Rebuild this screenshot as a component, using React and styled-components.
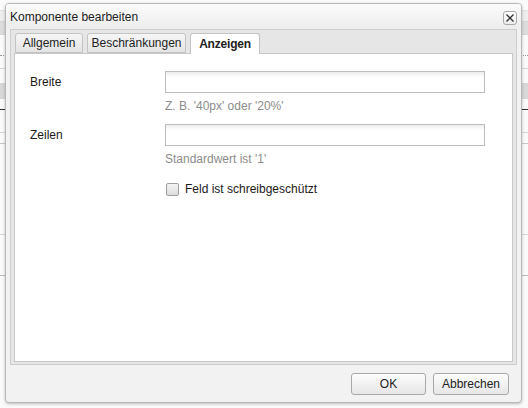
import React from 'react';
import styled, { createGlobalStyle } from 'styled-components';

const GlobalStyle = createGlobalStyle`
	html, body {
		margin: 0;
		padding: 0;
		background: #fafafa;
	}
	body {
		font-family: 'Liberation Sans', Arial, sans-serif;
		font-size: 12px;
		color: #1a1a1a;
	}
`;

const Page = styled.div`
	position: relative;
	width: 528px;
	height: 408px;
	overflow: hidden;
	background: #fafafa;
`;

const BgRow = styled.div`
	height: ${(p) => p.h}px;
	background: ${(p) => p.bg || 'transparent'};
	border-bottom: 1px ${(p) => p.line || 'solid'} ${(p) => p.color || '#d6d6d6'};
`;

const Dialog = styled.div`
	position: absolute;
	left: 5px;
	top: 3px;
	width: 515px;
	height: 398px;
	display: flex;
	flex-direction: column;
	border: 1px solid #b8b8b8;
	border-radius: 4px;
	background: #f2f2f2;
	box-shadow: 0 1px 3px rgba(0, 0, 0, 0.25);
	overflow: hidden;
`;

const TitleBar = styled.div`
	height: 25px;
	display: flex;
	align-items: center;
	justify-content: space-between;
	padding: 0 4px 0 4px;
	background: linear-gradient(#fbfbfb, #ededed);
	font-size: 12px;
	color: #222;
`;

const CloseButton = styled.button`
	width: 14px;
	height: 14px;
	margin-top: 2px;
	padding: 0;
	display: flex;
	align-items: center;
	justify-content: center;
	border: 1px solid #a9a9a9;
	border-radius: 3px;
	background: linear-gradient(#ffffff, #ececec);
`;

const TabPanel = styled.div`
	flex: 1;
	margin: 0 4px;
	display: flex;
	flex-direction: column;
	border: 1px solid #cdcdcd;
	background: #e6e6e6;
`;

const TabStrip = styled.div`
	height: 23px;
	display: flex;
	align-items: flex-end;
	gap: 4px;
	padding: 0 4px;
`;

const Tab = styled.div`
	box-sizing: border-box;
	width: ${(p) => p.w}px;
	height: ${(p) => (p.active ? 21 : 20)}px;
	margin-bottom: ${(p) => (p.active ? -1 : 0)}px;
	display: flex;
	align-items: center;
	justify-content: center;
	border: 1px solid #c3c3c3;
	border-bottom: ${(p) => (p.active ? 'none' : '1px solid #c3c3c3')};
	border-radius: 3px 3px 0 0;
	background: ${(p) => (p.active ? '#ffffff' : 'linear-gradient(#f6f6f6, #e4e4e4)')};
	font-weight: ${(p) => (p.active ? 'bold' : 'normal')};
	letter-spacing: ${(p) => (p.active ? '-0.2px' : '0')};
	color: #222;
	position: relative;
	z-index: 1;
`;

const Content = styled.div`
	flex: 1;
	margin: 0 3px 2px 3px;
	border: 1px solid #c8c8c8;
	background: #ffffff;
	padding: 17px 0 0 15px;
`;

const Form = styled.div`
	display: grid;
	grid-template-columns: 135px 320px;
	align-items: start;
`;

const Label = styled.div`
	height: 22px;
	line-height: 22px;
	margin-top: ${(p) => p.top || 0}px;
`;

const Field = styled.div`
	display: flex;
	flex-direction: column;
	margin-top: ${(p) => p.top || 0}px;
`;

const Input = styled.div`
	height: 20px;
	border: 1px solid #bdbdbd;
	background: linear-gradient(#ececec, #ffffff 5px);
`;

const Hint = styled.div`
	margin-top: 6px;
	line-height: 14px;
	color: #8c8c8c;
`;

const CheckRow = styled.label`
	grid-column: 2;
	margin-top: 16px;
	display: flex;
	align-items: center;
	gap: 6px;
	height: 14px;
`;

const Box = styled.span`
	width: 11px;
	height: 11px;
	margin-left: 1px;
	border: 1px solid #9f9f9f;
	border-radius: 2px;
	background: linear-gradient(#f4f4f4, #dcdcdc);
`;

const Footer = styled.div`
	height: 37px;
	display: flex;
	align-items: center;
	justify-content: flex-end;
	gap: 7px;
	padding: 0 12px 0 0;
`;

const Button = styled.button`
	width: ${(p) => p.w}px;
	height: 22px;
	border: 1px solid #a8a8a8;
	border-radius: 3px;
	background: linear-gradient(#fdfdfd, #e6e6e6);
	font-family: 'Liberation Sans', Arial, sans-serif;
	font-size: 12px;
	color: #222;
	padding: 0;
`;

const App = () => {
	return (
		<Page>
			<GlobalStyle />
			<BgRow h={10} color="#e2e2e2" />
			<BgRow h={10} bg="#eeeeee" />
			<BgRow h={12} bg="#dcdcdc" />
			<BgRow h={20} line="dotted" color="#999" />
			<BgRow h={12} />
			<BgRow h={14} />
			<BgRow h={14} bg="#d8d8d8" />
			<BgRow h={10} color="#333" />
			<BgRow h={22} />
			<BgRow h={10} color="#c8c8c8" />
			<BgRow h={90} />
			<BgRow h={40} color="#bbbbbb" />

			<Dialog>
				<TitleBar>
					<span>Komponente bearbeiten</span>
					<CloseButton aria-label="Schließen">
						<svg width="10" height="10" viewBox="0 0 10 10">
							<path d="M1.5 1.5 L8.5 8.5 M8.5 1.5 L1.5 8.5" stroke="#333" strokeWidth="1.3" />
						</svg>
					</CloseButton>
				</TitleBar>
				<TabPanel>
					<TabStrip>
						<Tab w={68}>Allgemein</Tab>
						<Tab w={99}>Beschränkungen</Tab>
						<Tab w={70} active>
							Anzeigen
						</Tab>
					</TabStrip>
					<Content>
						<Form>
							<Label>Breite</Label>
							<Field>
								<Input />
								<Hint>Z. B. '40px' oder '20%'</Hint>
							</Field>
							<Label top={11}>Zeilen</Label>
							<Field top={11}>
								<Input />
								<Hint>Standardwert ist '1'</Hint>
							</Field>
							<CheckRow>
								<Box />
								<span>Feld ist schreibgeschützt</span>
							</CheckRow>
						</Form>
					</Content>
				</TabPanel>
				<Footer>
					<Button w={75}>OK</Button>
					<Button w={76}>Abbrechen</Button>
				</Footer>
			</Dialog>
		</Page>
	);
};

export default App;
